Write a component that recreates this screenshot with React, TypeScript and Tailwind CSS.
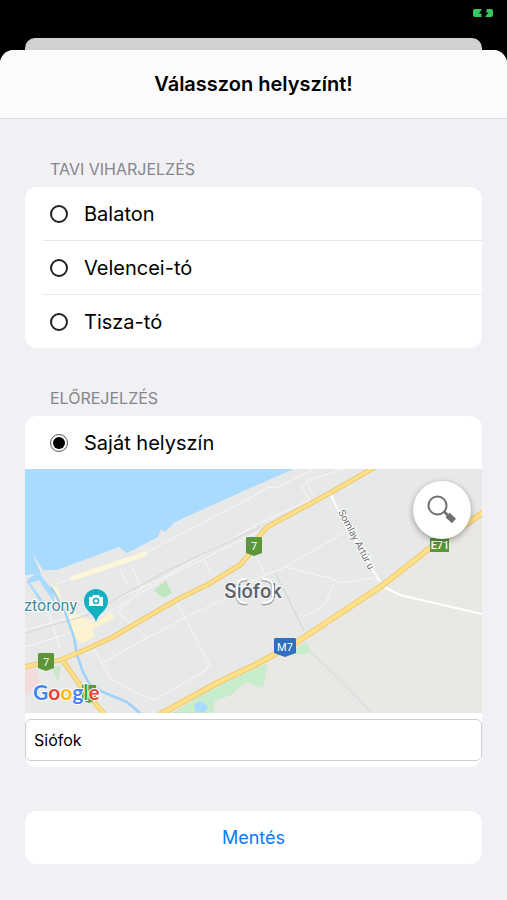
import React, { useState } from 'react';

const lakes = [
  { id: 'balaton', label: 'Balaton' },
  { id: 'velencei', label: 'Velencei-tó' },
  { id: 'tisza', label: 'Tisza-tó' },
];

function BatteryIcon() {
  return (
    <svg className="w-[22px] h-[10px]" viewBox="0 0 22 10" fill="#35c759" aria-hidden="true">
      <path d="M2 1H9L6 5.5H8.5V9H2Q0 9 0 7V3Q0 1 2 1Z" />
      <path d="M14 1H18Q20 1 20 3V7Q20 9 18 9H12L15.5 4.5H13Z" />
    </svg>
  );
}

function SearchIcon() {
  return (
    <svg className="w-[30px] h-[30px]" viewBox="0 0 30 30" fill="none" stroke="#6f6f6f" aria-hidden="true">
      <circle cx="10.5" cy="10.5" r="9" strokeWidth="2" />
      <path d="M17 16.5L21 20.5" strokeWidth="2.5" />
      <path d="M20.5 20L27 26" strokeWidth="6" />
    </svg>
  );
}

type OptionProps = {
  id: string;
  label: string;
  selected: string;
  onSelect: (id: string) => void;
};

function Option({ id, label, selected, onSelect }: OptionProps) {
  return (
    <label className="flex items-center gap-4 h-[53px] text-[20px] leading-6 text-black">
      <span className="flex w-[18px] h-[18px]">
        <input
          type="radio"
          name="location"
          checked={selected === id}
          onChange={() => onSelect(id)}
          className="appearance-none w-full h-full rounded-full border-2 border-[#222] checked:border checked:border-[#555] checked:bg-black checked:bg-clip-content checked:p-[2px]"
        />
      </span>
      {label}
    </label>
  );
}

function MapView() {
  return (
    <svg
      className="block w-full h-[244px] bg-[#e8e8e8]"
      viewBox="0 0 457 244"
      preserveAspectRatio="xMidYMid slice"
      fontFamily="Roboto, sans-serif"
    >
      {/* land and water */}
      <path d="M0 0H457V244H0Z" fill="#e7e8e8" />
      <path d="M138 244L192 214L272 173L358 116L405 79L457 44V244Z" fill="#e9e8e4" />
      <path d="M0 0H269L225 19L150 53L140 63L136 60L133 68L102 84L94 78L32 101L18 101L7 83L16 105L0 106Z" fill="#a9daff" />
      <path d="M4 109L14 104L25 118L40 142L34 140L24 126L14 111L5 114L22 137L16 134L2 113Z" fill="#a9daff" />
      <path d="M0 226V198H10L16 212Z" fill="#f3dcdc" />
      <path d="M27 199L36 196L33 214Z" fill="#cbe8cc" />
      <path d="M129 121L141 112L147 124L138 129Z" fill="#bfe6bf" />
      <path d="M147 244L192 217L243 194L238 219L221 213L206 226L190 232L188 244Z" fill="#c8edcd" />
      <path d="M262 184L281 173L287 183L272 186Z" fill="#c8edcd" />
      <path d="M169 236L174 232L183 237L180 243H171Z" fill="#a9daff" />

      {/* built up strips */}
      <path d="M48 109L120 85" stroke="#fdf6d8" strokeWidth="5" strokeLinecap="round" />
      <path d="M27 115L33 119L38 139L60 149L71 153L87 143L89 149L67 160L70 168L58 174L48 169L42 150L30 135Z" fill="#fdf3d0" />

      {/* streets */}
      <g fill="none" stroke="#f7f7f7" strokeWidth="1">
        <path d="M32 115L48 109M120 84L225 29L243 18L252 19L288 0" />
        <path d="M285 31L277 18L285 11L318 0M281 11L288 27" />
        <path d="M0 161L60 144L132 112L235 54L285 31" />
        <path d="M95 100L102 116M107 97L115 118M179 91L187 105" />
        <path d="M0 178L42 165L93 138L142 108L235 62" />
        <path d="M22 137L35 180M65 173L77 194L122 169L160 149L205 127L225 113L260 98L320 63" />
        <path d="M152 133L160 149L185 196L178 203L130 231L110 223L85 209L77 194" />
        <path d="M122 169L93 143L108 129L118 116" />
        <path d="M260 98L305 109L315 114L348 109" />
        <path d="M225 75L240 105M308 116L300 136L290 142L278 148" />
      </g>
      <g fill="none" stroke="#d5d7d9" strokeWidth="1.2">
        <path d="M0 164L60 147L142 102L235 58M250 104L266 135L279 162" />
      </g>
      <g fill="none" stroke="#fff" strokeWidth="2">
        <path d="M305 24L313 41L355 113" />
        <path d="M359 118L375 126L457 145" />
      </g>

      {/* canal */}
      <path d="M26 118L40 143L49 168L52 186L58 203L65 216L78 223L102 233L115 244" fill="none" stroke="#9fd2fa" strokeWidth="2.5" />
      <path d="M286 183L320 216L347 244" fill="none" stroke="#d6e4e8" strokeWidth="1.5" />

      {/* main roads */}
      <g fill="none" stroke="#efc96f" strokeWidth="5" strokeLinejoin="round">
        <path d="M-2 198L35 191L55 183L88 168L122 148L155 129L182 116L215 96L227 82L235 66L242 58L305 24L350 -2" />
        <path d="M38 192L55 216L80 246" />
        <path d="M134 246L192 214L230 196L272 173L358 116L405 79L459 43" strokeWidth="6" />
      </g>
      <g fill="none" stroke="#ffe08a" strokeWidth="3" strokeLinejoin="round">
        <path d="M-2 198L35 191L55 183L88 168L122 148L155 129L182 116L215 96L227 82L235 66L242 58L305 24L350 -2" />
        <path d="M38 192L55 216L80 246" />
        <path d="M134 246L192 214L230 196L272 173L358 116L405 79L459 43" strokeWidth="4" />
      </g>

      {/* road shields */}
      <g fill="#5b9638">
        <path d="M14 184H28L29 185V199L21 202L13 199V185Z" />
        <path d="M222 68H236L237 69V84L229 87L221 84V69Z" />
        <path d="M57 216H71V231L64 234L57 231Z" />
        <path d="M405 69H424V83H405Z" />
      </g>
      <path d="M250 169H270L271 170V184L260 188L249 184V170Z" fill="#2f6fc4" />
      <g fill="#fff" fontSize="11" textAnchor="middle">
        <text x="21" y="197">7</text>
        <text x="229" y="81">7</text>
        <text x="260" y="182">M7</text>
        <text x="415" y="80" fontWeight="500">E71</text>
      </g>

      {/* places */}
      <path d="M71 153C69 144 59 142 59 132A12 12 0 0 1 83 132C83 142 73 144 71 153Z" fill="#12b0c3" />
      <path d="M64 128H67L68 126H74L75 128H78V137H64Z" fill="#fff" />
      <circle cx="71" cy="132" r="2.5" fill="#fff" stroke="#12b0c3" strokeWidth="1.5" />
      <text x="52" y="142" fontSize="16" textAnchor="end" fill="#3a8c9c" stroke="#fff" strokeWidth="2" paintOrder="stroke">ztorony</text>
      <text transform="translate(313 43) rotate(62)" fontSize="10" fill="#6b6b6b" stroke="#fff" strokeWidth="2" paintOrder="stroke">Somlay Artúr u.</text>
      <text x="228" y="129" fontSize="20" fontWeight="500" textAnchor="middle" fill="#5c6168" stroke="#f7f7f7" strokeWidth="2" paintOrder="stroke">Siófok</text>

      {/* centre mark */}
      <g fill="none" strokeLinecap="round">
        <path d="M221 111Q212 111 212 119V127Q212 135 221 135M238 111Q248 111 248 119V127Q248 135 238 135" stroke="#a5a5a5" strokeWidth="3" />
        <path d="M221 110Q212 110 212 118V126Q212 134 221 134M238 110Q248 110 248 118V126Q248 134 238 134" stroke="#fff" strokeWidth="2" />
      </g>

      <text x="8" y="231" fontSize="21" fontFamily="Lato, sans-serif" fontWeight="700" stroke="#fff" strokeWidth="2" paintOrder="stroke">
        <tspan fill="#4285f4">G</tspan>
        <tspan fill="#ea4335">o</tspan>
        <tspan fill="#fbbc05">o</tspan>
        <tspan fill="#4285f4">g</tspan>
        <tspan fill="#34a853">l</tspan>
        <tspan fill="#ea4335">e</tspan>
      </text>
    </svg>
  );
}

export default function App() {
  const [selected, setSelected] = useState('custom');
  const [place, setPlace] = useState('Siófok');

  return (
    <div className="min-h-screen flex flex-col bg-black font-[Inter,sans-serif]">
      <div className="flex justify-end h-[38px] pt-2 pr-3">
        <BatteryIcon />
      </div>
      <div className="h-3 mx-[25px] rounded-t-[10px] bg-[#d1d1d1]" />

      <main className="flex-1 flex flex-col rounded-t-[14px] overflow-hidden bg-[#f0f0f5]">
        <header className="flex items-center justify-center h-[69px] bg-[#fbfbfd] border-b border-[#dcdce0]">
          <h1 className="text-[20px] leading-6 font-semibold text-black">Válasszon helyszínt!</h1>
        </header>

        <form className="flex flex-col px-[25px]" onSubmit={(e) => e.preventDefault()}>
          <h2 className="mt-10 mb-2 pl-[25px] text-[16px] leading-5 text-[#86868b]">TAVI VIHARJELZÉS</h2>
          <div className="pl-[18px] rounded-xl bg-white divide-y divide-[#e6e6e8]">
            {lakes.map((lake) => (
              <div key={lake.id} className="pl-[7px]">
                <Option {...lake} selected={selected} onSelect={setSelected} />
              </div>
            ))}
          </div>

          <h2 className="mt-10 mb-2 pl-[25px] text-[16px] leading-5 text-[#86868b]">ELŐREJELZÉS</h2>
          <div className="pb-[6px] rounded-xl bg-white">
            <div className="pl-[25px]">
              <Option id="custom" label="Saját helyszín" selected={selected} onSelect={setSelected} />
            </div>
            <div className="relative">
              <MapView />
              <button
                type="button"
                aria-label="Keresés"
                className="absolute top-3 right-[11px] flex items-center justify-center w-[58px] h-[58px] rounded-full bg-white shadow-[0_2px_6px_rgba(0,0,0,0.35)]"
              >
                <SearchIcon />
              </button>
            </div>
            <input
              type="text"
              aria-label="Helyszín"
              value={place}
              onChange={(e) => setPlace(e.target.value)}
              className="block w-full h-[42px] mt-[6px] px-2 rounded-md border border-[#cfcfd2] bg-white text-[16px] leading-5 text-black"
            />
          </div>

          <button type="submit" className="h-[53px] mt-11 mb-9 rounded-xl bg-white text-[18px] leading-6 text-[#087aff]">
            Mentés
          </button>
        </form>
      </main>
    </div>
  );
}
